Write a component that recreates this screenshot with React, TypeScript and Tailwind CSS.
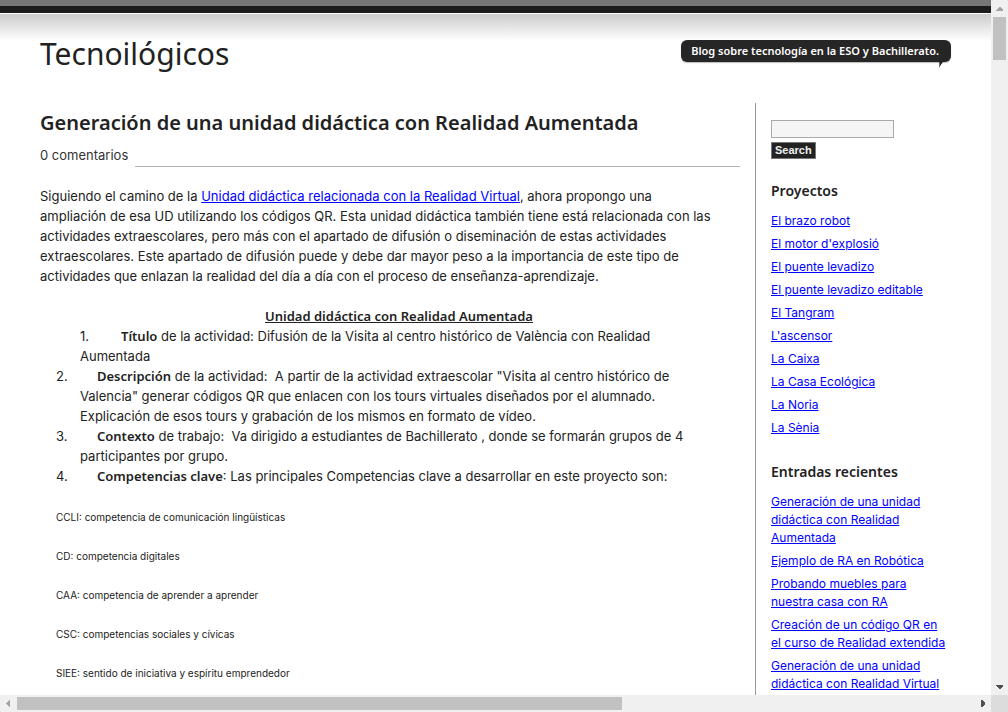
import React from "react";

const projects = [
  "El brazo robot",
  "El motor d'explosió",
  "El puente levadizo",
  "El puente levadizo editable",
  "El Tangram",
  "L'ascensor",
  "La Caixa",
  "La Casa Ecológica",
  "La Noria",
  "La Sènia",
];

const recent: string[][] = [
  ["Generación de una unidad", "didáctica con Realidad", "Aumentada"],
  ["Ejemplo de RA en Robótica"],
  ["Probando muebles para", "nuestra casa con RA"],
  ["Creación de un código QR en", "el curso de Realidad extendida"],
  ["Generación de una unidad", "didáctica con Realidad Virtual"],
];

const competences = [
  "CCLI: competencia de comunicación lingüísticas",
  "CD: competencia digitales",
  "CAA: competencia de aprender a aprender",
  "CSC: competencias sociales y cívicas",
  "SIEE: sentido de iniciativa y espíritu emprendedor",
];

function Lines({ lines }: { lines: string[] }) {
  return (
    <>
      {lines.map((line, i) => (
        <React.Fragment key={line}>
          {i > 0 && <br />}
          {line}
        </React.Fragment>
      ))}
    </>
  );
}

function Marker({ children }: { children: string }) {
  return <span className="inline-block w-[41px] indent-0">{children}</span>;
}

function Strong({ children }: { children: string }) {
  return <b className="font-['Noto_Sans',sans-serif] text-[13px] leading-none font-semibold">{children}</b>;
}

function LinkList({ title, items }: { title: string; items: string[][] }) {
  return (
    <section>
      <h2 className="text-sm leading-5 font-semibold">{title}</h2>
      <ul className="mt-[11px] flex flex-col gap-[5px] font-['Inter',sans-serif] text-[12px] leading-[18px]">
        {items.map((lines) => (
          <li key={lines.join(" ")}>
            <a href="#" className="text-[#0000ff] underline">
              <Lines lines={lines} />
            </a>
          </li>
        ))}
      </ul>
    </section>
  );
}

function Header() {
  return (
    <header>
      <div className="h-[6px] bg-[#777777]" />
      <div className="h-[7px] bg-[#1c1c1c]" />
      <div className="mt-px h-[89px] bg-[linear-gradient(#cccccc,#ffffff_27px)] pr-10 pl-10">
        <div className="flex items-start justify-between pt-5">
          <h1 className="text-[30px] leading-10">Tecnoilógicos</h1>
          <p className="relative mt-[6px] flex h-[22px] items-center rounded-md bg-[#262626] pr-3 pl-[10px] text-[11px] font-semibold text-white shadow-[0_1px_1px_#bbbbbb]">
            Blog sobre tecnología en la ESO y Bachillerato.
            <svg className="absolute top-[21px] right-[7px]" width="6" height="7" viewBox="0 0 6 7" aria-hidden="true">
              <path d="M1 0H6C4 2 2.500 4 1 7C1.500 4 1.500 2 1 0Z" fill="#262626" />
            </svg>
          </p>
        </div>
      </div>
    </header>
  );
}

function Article() {
  return (
    <article className="min-w-0 flex-1 font-['Inter',sans-serif] text-[13px] leading-5">
      <h2 className="pt-[7px] font-['Noto_Sans',sans-serif] text-xl leading-[26px] font-semibold">
        Generación de una unidad didáctica con Realidad Aumentada
      </h2>
      <div className="mt-[9px] mr-[15px] flex items-start">
        <span className="pr-[7px] text-[#333333]">0 comentarios</span>
        <span className="h-[22px] flex-1 border-b border-[#b5b5b5]" />
      </div>
      <p className="mt-[19px]">
        Siguiendo el camino de la{" "}
        <a href="#" className="text-[#0000ff] underline">
          Unidad didáctica relacionada con la Realidad Virtual
        </a>
        , ahora propongo una
        <br />
        ampliación de esa UD utilizando los códigos QR. Esta unidad didáctica también tiene está relacionada con las
        <br />
        actividades extraescolares, pero más con el apartado de difusión o diseminación de estas actividades
        <br />
        extraescolares. Este apartado de difusión puede y debe dar mayor peso a la importancia de este tipo de
        <br />
        actividades que enlazan la realidad del día a día con el proceso de enseñanza-aprendizaje.
      </p>
      <h3 className="mt-5 mr-[15px] pl-[225px] underline">
        <Strong>Unidad didáctica con Realidad Aumentada</Strong>
      </h3>
      <ol className="pl-10">
        <li>
          <Marker>1.</Marker>
          <Strong>Título</Strong> de la actividad: Difusión de la Visita al centro histórico de València con Realidad
          <br />
          Aumentada
        </li>
        <li className="-indent-6">
          <Marker>2.</Marker>
          <Strong>Descripción</Strong> de la actividad:&nbsp; A partir de la actividad extraescolar "Visita al centro histórico de
          <br />
          <span className="block indent-0">
            Valencia" generar códigos QR que enlacen con los tours virtuales diseñados por el alumnado.
            <br />
            Explicación de esos tours y grabación de los mismos en formato de vídeo.
          </span>
        </li>
        <li className="-indent-6">
          <Marker>3.</Marker>
          <Strong>Contexto</Strong> de trabajo:&nbsp; Va dirigido a estudiantes de Bachillerato , donde se formarán grupos de 4
          <br />
          participantes por grupo.
        </li>
        <li className="-indent-6">
          <Marker>4.</Marker>
          <Strong>Competencias clave</Strong>: Las principales Competencias clave a desarrollar en este proyecto son:
        </li>
      </ol>
      <ul className="mt-[21px] flex flex-col gap-[19px] pl-4 text-[10px]">
        {competences.map((text) => (
          <li key={text}>{text}</li>
        ))}
      </ul>
    </article>
  );
}

function Sidebar() {
  return (
    <aside className="flex w-[196px] shrink-0 flex-col gap-[25px] border-l border-[#999999] pt-[17px] pb-10 pl-[15px] whitespace-nowrap">
      <form className="-mb-[3px] flex flex-col items-start gap-1">
        <input
          type="text"
          aria-label="Search"
          className="h-[18px] w-[123px] border border-[#a9a9a9] bg-[#f5f5f5] px-1 text-[11px]"
        />
        <button
          type="button"
          className="h-[17px] border border-[#777777] bg-[#222222] px-[3px] font-['Liberation_Sans',sans-serif] text-[11px] leading-[15px] font-bold text-[#eeeeee]"
        >
          Search
        </button>
      </form>
      <LinkList title="Proyectos" items={projects.map((name) => [name])} />
      <LinkList title="Entradas recientes" items={recent} />
    </aside>
  );
}

function Arrow({ d, fill }: { d: string; fill: string }) {
  return (
    <svg width="17" height="17" viewBox="0 0 17 17" shapeRendering="crispEdges" className="shrink-0" aria-hidden="true">
      <path d={d} fill={fill} />
    </svg>
  );
}

export default function App() {
  return (
    <div className="grid h-screen grid-cols-[minmax(0,1fr)_17px] grid-rows-[minmax(0,1fr)_17px] overflow-hidden bg-white font-['Noto_Sans',sans-serif] text-[#222222]">
      <div className="overflow-hidden">
        <Header />
        <main className="flex pr-10 pl-10 whitespace-nowrap">
          <Article />
          <Sidebar />
        </main>
      </div>
      <div className="flex flex-col items-center bg-[#f0f0f0]">
        <Arrow d="M5 11H12V10L9 7H8L5 10Z" fill="#a3a3a3" />
        <div className="h-[43px] w-[13px] bg-[#c1c1c1]" />
        <div className="flex-1" />
        <Arrow d="M5 7H12V8L9 11H8L5 8Z" fill="#505050" />
      </div>
      <div className="flex items-center bg-[#f0f0f0]">
        <Arrow d="M10 5V12H9L6 9V8L9 5Z" fill="#a3a3a3" />
        <div className="h-[13px] w-[61%] bg-[#c1c1c1]" />
        <div className="flex-1" />
        <Arrow d="M7 5V12H8L11 9V8L8 5Z" fill="#505050" />
      </div>
      <div className="bg-[#dcdcdc]" />
    </div>
  );
}
